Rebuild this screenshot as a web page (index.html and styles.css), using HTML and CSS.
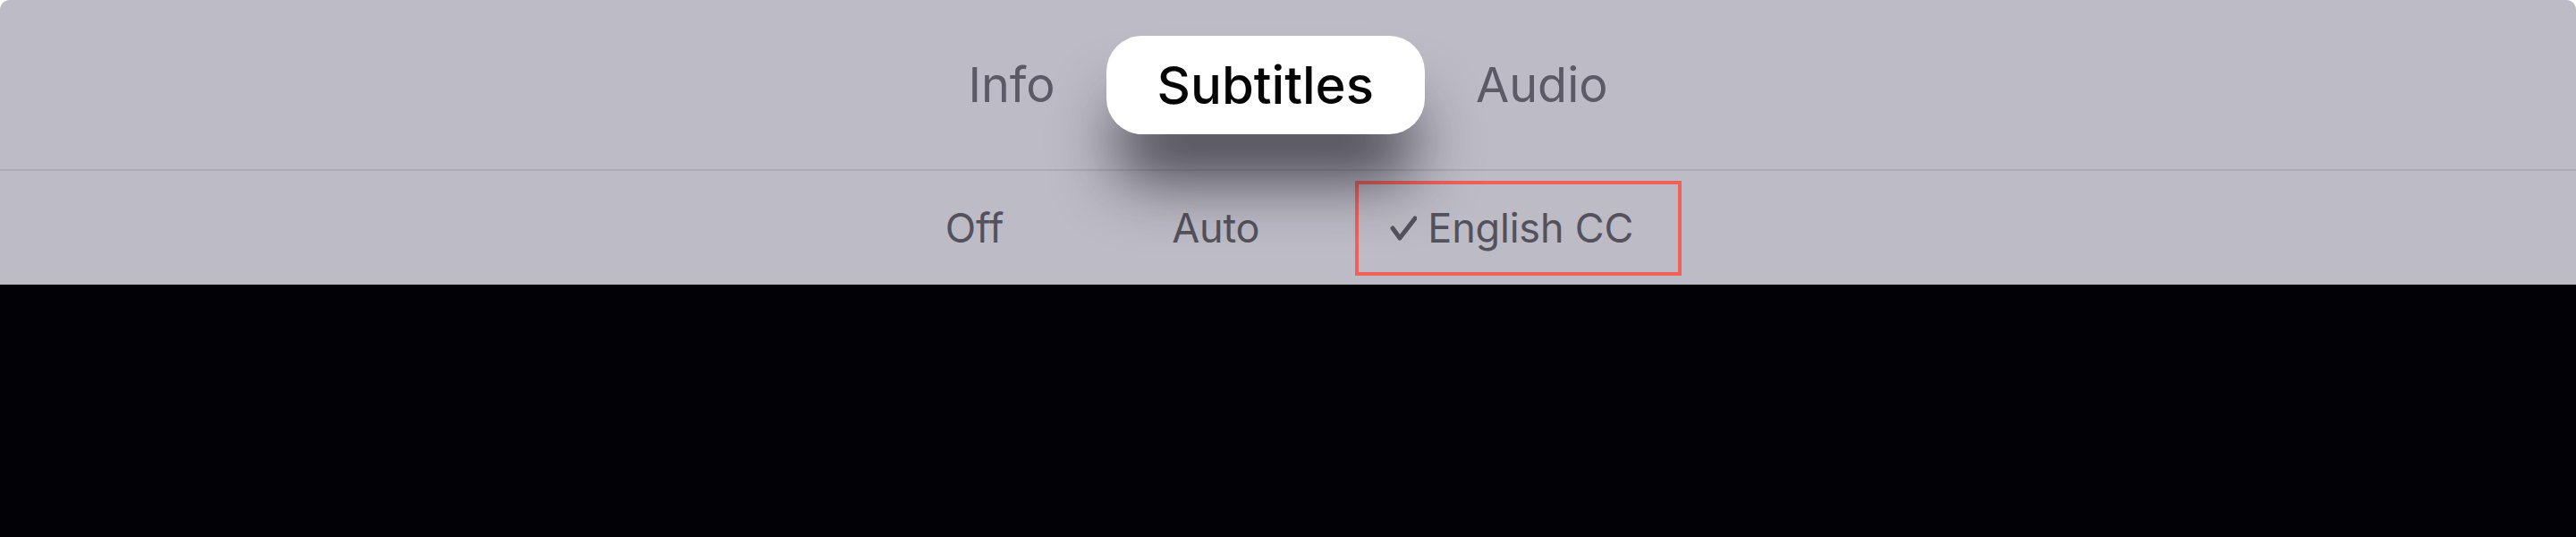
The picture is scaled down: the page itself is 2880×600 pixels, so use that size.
FILE: index.html
```html
<!DOCTYPE html>
<html lang="en">
<head>
<meta charset="utf-8">
<title>Subtitles</title>
<link rel="stylesheet" href="styles.css">
</head>
<body>
<div class="screen">
  <div class="panel">
    <nav class="tabs">
      <div class="tab">Info</div>
      <div class="tab tab-active">Subtitles</div>
      <div class="tab">Audio</div>
    </nav>
    <div class="options">
      <div class="opt"><span class="check"></span><span class="label">Off</span></div>
      <div class="opt"><span class="check"></span><span class="label">Auto</span></div>
      <div class="opt opt-selected">
        <span class="check check-on"><svg width="30" height="28" viewBox="0 0 30 28"><path d="M3 14 L11 25 L28 3" fill="none" stroke="#54535c" stroke-width="5" stroke-linecap="round" stroke-linejoin="round"/></svg></span>
        <span class="label">English CC</span>
        <span class="highlight"></span>
      </div>
    </div>
  </div>
  <div class="video"></div>
</div>
</body>
</html>
```

FILE: styles.css
```css
html, body {
  margin: 0;
  padding: 0;
  background: #ffffff;
}

.screen {
  width: 2880px;
  height: 600px;
  display: flex;
  flex-direction: column;
  border-radius: 11px 11px 0 0;
  overflow: hidden;
  font-family: "Inter", "Roboto", "Liberation Sans", sans-serif;
}

.panel {
  height: 318px;
  background: #bdbbc6;
  display: flex;
  flex-direction: column;
}

.tabs {
  height: 191px;
  box-sizing: border-box;
  display: flex;
  justify-content: center;
  align-items: center;
  border-bottom: 2px solid #acaab5;
  position: relative;
  z-index: 1;
}

.tab {
  height: 110px;
  padding: 0 57px;
  display: flex;
  align-items: center;
  font-size: 54px;
  color: #5c5a66;
}

.tab-active {
  background: #ffffff;
  color: #050505;
  border-radius: 40px;
  font-size: 58px;
  font-weight: 500;
  box-shadow: 0 62px 70px -12px rgba(24, 22, 32, 0.72);
}

.options {
  flex: 1;
  display: flex;
  justify-content: center;
  align-items: center;
  gap: 97px;
}

.opt {
  position: relative;
  display: flex;
  align-items: center;
  padding-right: 44px;
  font-size: 45px;
  color: #53525c;
}

.check {
  width: 30px;
  height: 28px;
  margin-right: 17px;
  display: flex;
}

.check-on {
  margin-left: 5px;
  margin-right: 12px;
}

.label {
  letter-spacing: -0.2px;
}

.highlight {
  position: absolute;
  left: -34px;
  right: -10px;
  top: 50%;
  height: 106px;
  margin-top: -53px;
  border: 4px solid #f0615b;
  box-sizing: border-box;
}

.video {
  flex: 1;
  background: #020106;
}
```
